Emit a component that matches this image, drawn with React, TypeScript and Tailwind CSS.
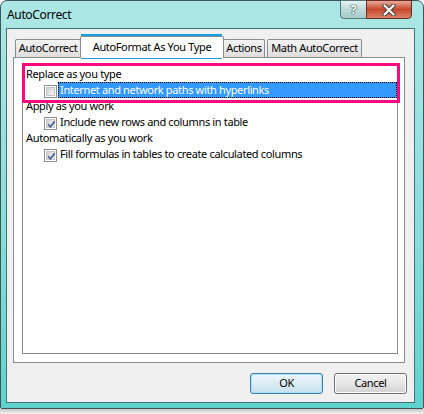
import React from "react";

// small Vista-style checkbox
function CheckBox({ checked }: { checked?: boolean }) {
  return (
    <span className="relative mt-[2px] flex h-[13px] w-[13px] shrink-0 items-center justify-center border border-[#8e8f8f] bg-white">
      <span className="h-[9px] w-[9px] border border-[#c4c4c4] bg-gradient-to-br from-[#cfcfcf] to-[#f7f7f7]" />
      {checked && (
        <svg className="absolute left-[1px] top-[1px]" width="11" height="11" viewBox="0 0 11 11">
          <path d="M2.2 5.4 L4.4 7.8 L8.8 2.4" fill="none" stroke="#4b5f96" strokeWidth="1.7" />
        </svg>
      )}
    </span>
  );
}

function Heading({ children }: { children: React.ReactNode }) {
  return <div className="flex h-[16px] items-center pl-[3px] text-[11px] text-black">{children}</div>;
}

function Option({ label, checked, selected }: { label: string; checked?: boolean; selected?: boolean }) {
  return (
    <div className="flex h-[16px] items-center pl-[21px]">
      <CheckBox checked={checked} />
      <span
        className={
          selected
            ? "ml-[1px] flex h-[16px] flex-1 items-center border border-dotted border-black bg-[#3399ff] pl-[1px] text-[11px] text-white"
            : "ml-[1px] flex h-[16px] flex-1 items-center pl-[2px] text-[11px] text-black"
        }
      >
        {label}
      </span>
    </div>
  );
}

export default function App() {
  const tabs = "flex h-[18px] items-center justify-center rounded-t-[2px] border border-b-0 border-[#898c95] bg-gradient-to-b from-[#f4f4f4] to-[#dedede] text-[11px] text-black";

  return (
    <div className="relative h-[414px] w-[424px] overflow-hidden bg-white font-['Noto_Sans',sans-serif] tracking-[-0.35px]">
      {/* window frame */}
      <div className="flex h-[409px] w-[424px] flex-col rounded-t-[7px] rounded-b-[2px] border border-[#3d5656] bg-gradient-to-b from-[#ace7e5] via-[#8ddedb] to-[#5fd2ce]">
        {/* title bar */}
        <div className="flex h-[27px] items-start justify-between">
          <div className="pl-[6px] pt-[6px] text-[12px] leading-[16px] text-black">AutoCorrect</div>
          <div className="-mt-px mr-[11px] flex">
            <div className="flex h-[19px] w-[27px] items-center justify-center rounded-bl-[4px] border border-[#587575] bg-gradient-to-b from-[#e4f3f3] via-[#bcd9d9] to-[#a6cccc] text-[13px] font-bold leading-none text-white [text-shadow:0_0_1px_#2b3b3b,0_0_1px_#2b3b3b,0_0_1px_#2b3b3b]">
              ?
            </div>
            <div className="-ml-px flex h-[19px] w-[46px] items-center justify-center rounded-br-[4px] border border-[#6b2b20] bg-gradient-to-b from-[#e7aa98] via-[#c6462b] to-[#d9846a]">
              <svg width="14" height="12" viewBox="0 0 14 12">
                <path d="M2.5 1.5 L11.5 10.5 M11.5 1.5 L2.5 10.5" stroke="#3a3a3a" strokeWidth="4.2" strokeLinecap="round" />
                <path d="M2.5 1.5 L11.5 10.5 M11.5 1.5 L2.5 10.5" stroke="#ffffff" strokeWidth="2.4" strokeLinecap="round" />
              </svg>
            </div>
          </div>
        </div>

        {/* client area */}
        <div className="mb-[5px] ml-[5px] mr-[8px] flex flex-1 flex-col border border-[#3f7473] bg-[#f0f0f0]">
          <div className="ml-[6px] mr-[9px]">
            {/* tab strip */}
            <div className="flex h-[28px] items-end pl-[2px]">
              <div className={`${tabs} w-[66px]`}>AutoCorrect</div>
              <div className="relative z-10 -mb-px -ml-px flex h-[22px] w-[144px] items-center justify-center rounded-t-[2px] border border-b-0 border-[#898c95] bg-white text-[11px] text-black">
                AutoFormat As You Type
              </div>
              <div className={`${tabs} -ml-px w-[42px]`}>Actions</div>
              <div className={`${tabs} ml-[2px] w-[95px]`}>Math AutoCorrect</div>
            </div>

            {/* tab panel */}
            <div className="h-[306px] border border-[#898c95] bg-white pb-[8px] pl-[8px] pr-[6px] pt-[5px]">
              <div className="h-[291px] border border-[#828790] bg-white pt-[2px]">
                <Heading>Replace as you type</Heading>
                <Option label="Internet and network paths with hyperlinks" selected />
                <Heading>Apply as you work</Heading>
                <Option label="Include new rows and columns in table" checked />
                <Heading>Automatically as you work</Heading>
                <Option label="Fill formulas in tables to create calculated columns" checked />
              </div>
            </div>
          </div>

          {/* buttons */}
          <div className="mt-[10px] flex justify-end gap-[11px] pr-[7px]">
            <button className="flex h-[21px] w-[73px] items-center justify-center rounded-[3px] border border-[#3c7fb1] bg-gradient-to-b from-[#edf7fc] via-[#dcecf5] to-[#c4e0ef] text-[11px] text-black shadow-[inset_0_0_0_1px_#a8e0f6]">
              OK
            </button>
            <button className="flex h-[21px] w-[73px] items-center justify-center rounded-[3px] border border-[#707070] bg-gradient-to-b from-[#f2f2f2] via-[#e6e6e6] to-[#d2d2d2] text-[11px] text-black shadow-[inset_0_0_0_1px_#fcfcfc]">
              Cancel
            </button>
          </div>
        </div>
      </div>
      <div className="h-[5px] bg-gradient-to-b from-[#c6c6c6] to-[#f2f2f2]" />

      {/* annotation overlays */}
      <div className="pointer-events-none absolute left-[81px] top-[34px] h-[25px] w-[141px] border-[3px] border-[#14a0e0]" />
      <div className="pointer-events-none absolute left-[22px] top-[63px] h-[40px] w-[378px] border-[3px] border-[#fa0a7e]" />
    </div>
  );
}
